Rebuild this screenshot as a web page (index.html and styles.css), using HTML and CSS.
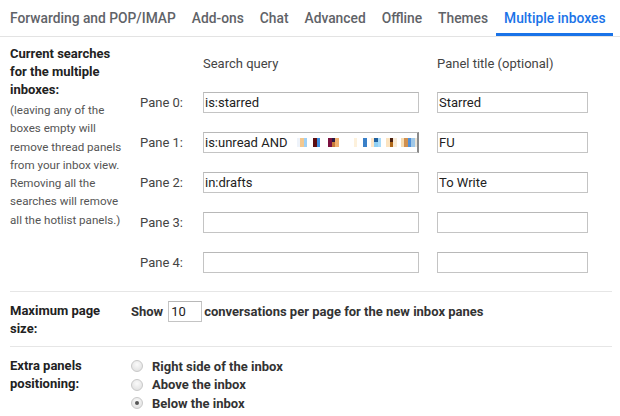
FILE: index.html
```html
<!DOCTYPE html>
<html lang="en">
<head>
<meta charset="utf-8">
<title>Settings - Multiple inboxes</title>
<link rel="stylesheet" href="styles.css">
</head>
<body>
<nav class="tabs">
  <a class="tab">Forwarding and POP/IMAP</a>
  <a class="tab">Add-ons</a>
  <a class="tab">Chat</a>
  <a class="tab">Advanced</a>
  <a class="tab">Offline</a>
  <a class="tab">Themes</a>
  <a class="tab active">Multiple inboxes</a>
</nav>

<main class="settings">
  <section class="row row-panes">
    <div class="label-col">
      <div class="heading">Current searches for the multiple inboxes:</div>
      <div class="desc">(leaving any of the boxes empty will remove thread panels from your inbox view. Removing all the searches will remove all the hotlist panels.)</div>
    </div>
    <div class="panes">
      <div></div>
      <div class="col-head">Search query</div>
      <div class="col-head">Panel title (optional)</div>

      <div class="pane-label">Pane 0:</div>
      <input class="field query" type="text" value="is:starred">
      <input class="field title" type="text" value="Starred">

      <div class="pane-label">Pane 1:</div>
      <div class="field query fake">is:unread AND <span class="blur"><i class="s w5"></i><i class="b c1"></i><i class="b c2"></i><i class="b c3"></i><i class="s w6"></i><i class="b c4"></i><i class="b c5"></i><i class="s w8"></i><i class="b c6"></i><i class="b c7"></i><i class="b c8"></i><i class="s w16"></i><i class="b c9"></i><i class="s w6"></i><i class="b c10"></i><i class="s w4"></i><i class="b c11"></i><i class="b c12"></i><i class="b c13"></i><i class="s w7"></i><i class="b c14"></i><i class="b c15"></i><i class="b c16"></i><i class="s w4"></i><i class="b c17"></i><i class="b c18"></i><i class="b c19"></i><i class="b c20"></i><i class="b c21"></i></span></div>
      <input class="field title" type="text" value="FU">

      <div class="pane-label">Pane 2:</div>
      <input class="field query" type="text" value="in:drafts">
      <input class="field title" type="text" value="To Write">

      <div class="pane-label">Pane 3:</div>
      <input class="field query" type="text" value="">
      <input class="field title" type="text" value="">

      <div class="pane-label">Pane 4:</div>
      <input class="field query" type="text" value="">
      <input class="field title" type="text" value="">
    </div>
  </section>

  <section class="row row-size">
    <div class="label-col">
      <div class="heading">Maximum page size:</div>
    </div>
    <div class="size-line">
      <span>Show</span>
      <input class="field num" type="text" value="10">
      <span>conversations per page for the new inbox panes</span>
    </div>
  </section>

  <section class="row row-pos">
    <div class="label-col">
      <div class="heading">Extra panels positioning:</div>
    </div>
    <div class="radios">
      <label class="radio"><span class="dot"></span>Right side of the inbox</label>
      <label class="radio"><span class="dot"></span>Above the inbox</label>
      <label class="radio"><span class="dot checked"></span>Below the inbox</label>
    </div>
  </section>
</main>
</body>
</html>
```

FILE: styles.css
```css
* { box-sizing: border-box; }

body {
  margin: 0;
  background: #fff;
  font-family: Roboto, "Liberation Sans", Arial, sans-serif;
  font-size: 13px;
  color: #222;
}

.tabs {
  display: flex;
  height: 37px;
  padding-left: 2px;
  border-bottom: 1px solid #e3e3e3;
  white-space: nowrap;
}

.tab {
  flex: none;
  display: flex;
  align-items: center;
  padding: 2px 8px 0;
  height: 36px;
  font-family: Roboto, sans-serif;
  font-size: 13.8px;
  font-weight: 500;
  color: #5f6368;
  border-bottom: 3px solid transparent;
}

.tab.active {
  color: #1a73e8;
  border-bottom-color: #1a73e8;
}

.settings {
  padding: 0 8px 0 10px;
}

.row {
  display: flex;
  border-bottom: 1px solid #e6e6e6;
}

.row-panes { padding: 8px 0 18px; }
.row-size { padding: 10px 0 8px; }
.row-pos { padding: 10px 0 10px; border-bottom: none; }

.label-col {
  width: 120px;
  flex: none;
}

.heading {
  font-weight: 700;
  line-height: 18px;
  color: #222;
}

.desc {
  margin-top: 2px;
  font-size: 11.6px;
  line-height: 18.3px;
  color: #555;
}

.panes {
  display: grid;
  grid-template-columns: 45px 216px 151px;
  column-gap: 18px;
  row-gap: 19px;
  padding-left: 10px;
  margin-top: 10px;
  align-items: center;
  align-content: start;
}

.col-head {
  line-height: 18px;
  color: #444;
}

.pane-label {
  color: #444;
  white-space: nowrap;
}

.field {
  height: 21px;
  border: 1px solid #c4c4c4;
  border-top-color: #b8b8b8;
  padding: 0 1px;
  font-family: Roboto, "Liberation Sans", Arial, sans-serif;
  font-size: 13px;
  color: #222;
  background: #fff;
  outline: none;
  margin: 0;
}

.fake {
  display: flex;
  align-items: center;
  white-space: pre;
  overflow: hidden;
  border-right: 2px solid #8a8a8a;
}

.blur {
  display: inline-flex;
  height: 9px;
  margin-left: 3px;
}

.blur i { display: block; height: 9px; flex: none; }
.blur .s { background: transparent; }
.blur .b { width: 3.5px; }
.w4 { width: 4px; }
.w5 { width: 3px; }
.w6 { width: 6px; }
.w7 { width: 5px; }
.w8 { width: 8px; }
.w16 { width: 15px; }
.c1 { background: #eef3fa; }
.c2 { background: #f3c890; }
.c3 { background: #9fd0f5; }
.c4 { background: #5c0e12; }
.c5 { background: #3d8ee0; }
.c6 { background: #7a1040; }
.c7 { background: linear-gradient(#2a1840 50%, #c87838 50%); }
.c8 { background: #f0b070; }
.c9 { background: #fdf1dc; }
.c10 { background: #3a80c8; }
.c11 { background: #fde6c8; }
.c12 { background: linear-gradient(#20609e 40%, #8fd0f5 40%); }
.c13 { background: #a8daf8; }
.c14 { background: #fbe3c0; }
.c15 { background: linear-gradient(#4a2010 40%, #b06818 40%); }
.c16 { background: #f8ead4; }
.c17 { background: #f8dcb0; }
.c18 { background: #d09050; }
.c19 { background: #5090d8; }
.c20 { background: #a0c8e8; }
.c21 { background: #ece4d6; }

.size-line {
  display: flex;
  align-items: center;
  height: 18px;
  margin-left: 1px;
  font-weight: 700;
  color: #333;
}

.num {
  width: 34px;
  margin: 0 2px 0 5px;
  padding-left: 2px;
  font-weight: 400;
}

.radios {
  display: flex;
  flex-direction: column;
  margin-left: 1px;
}

.radio {
  display: flex;
  align-items: center;
  height: 18.5px;
  font-weight: 700;
  color: #333;
}

.dot {
  width: 12px;
  height: 12px;
  border-radius: 50%;
  border: 1px solid #c8c8c8;
  background: radial-gradient(circle at 50% 35%, #fafafa, #dcdcdc);
  margin-right: 9px;
  position: relative;
}

.dot.checked::after {
  content: "";
  position: absolute;
  left: 3px;
  top: 3px;
  width: 4px;
  height: 4px;
  border-radius: 50%;
  background: #555;
}
```
